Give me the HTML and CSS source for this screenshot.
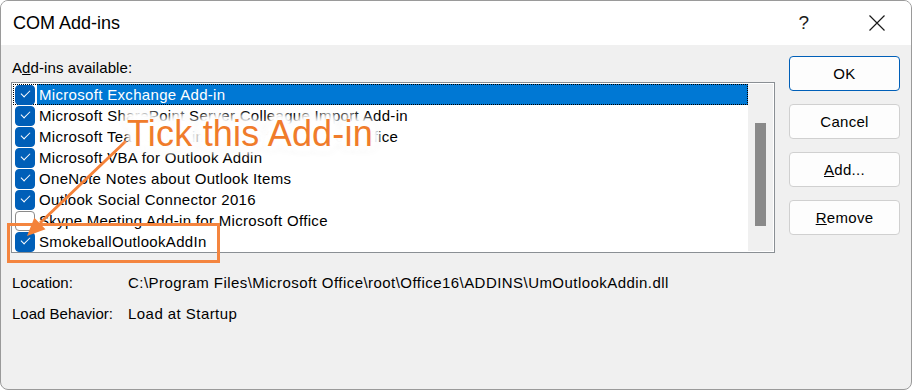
FILE: index.html
```html
<!DOCTYPE html>
<html lang="en">
<head>
    <meta charset="UTF-8">
    <title>COM Add-ins</title>
<link rel="stylesheet" href="styles.css">
</head>
<body>
    <div class="window">
        <div class="titlebar">
            <span class="title">COM Add-ins</span>
            <span class="help">?</span>
            <svg class="close" width="16" height="16" viewBox="0 0 16 16">
                <path d="M0.5 0.5 L15.5 15.5 M15.5 0.5 L0.5 15.5" stroke="#1a1a1a" stroke-width="1.2" fill="none"/>
            </svg>
        </div>

        <div class="content">
            <div class="main">
                <div class="list-label">A<u>d</u>d-ins available:</div>
                <div class="listbox">
                    <div class="rows">
                        <div class="row focused">
                            <span class="check on"></span>
                            <span class="name selected">Microsoft Exchange Add-in</span>
                        </div>
                        <div class="row">
                            <span class="check on"></span>
                            <span class="name">Microsoft SharePoint Server Colleague Import Add-in</span>
                        </div>
                        <div class="row">
                            <span class="check on"></span>
                            <span class="name">Microsoft Teams Meeting Add-in for Microsoft Office</span>
                        </div>
                        <div class="row">
                            <span class="check on"></span>
                            <span class="name">Microsoft VBA for Outlook Addin</span>
                        </div>
                        <div class="row">
                            <span class="check on"></span>
                            <span class="name">OneNote Notes about Outlook Items</span>
                        </div>
                        <div class="row">
                            <span class="check on"></span>
                            <span class="name">Outlook Social Connector 2016</span>
                        </div>
                        <div class="row">
                            <span class="check"></span>
                            <span class="name">Skype Meeting Add-in for Microsoft Office</span>
                        </div>
                        <div class="row">
                            <span class="check on"></span>
                            <span class="name">SmokeballOutlookAddIn</span>
                        </div>
                    </div>
                    <div class="scrollbar">
                        <div class="thumb"></div>
                    </div>
                </div>

                <div class="info">
                    <span class="info-key">Location:</span>
                    <span class="info-value">C:\Program Files\Microsoft Office\root\Office16\ADDINS\UmOutlookAddin.dll</span>
                </div>
                <div class="info">
                    <span class="info-key">Load Behavior:</span>
                    <span class="info-value">Load at Startup</span>
                </div>
            </div>

            <div class="buttons">
                <button class="btn default">OK</button>
                <button class="btn">Cancel</button>
                <button class="btn"><u>A</u>dd...</button>
                <button class="btn"><u>R</u>emove</button>
            </div>
        </div>

        <!-- annotation overlay -->
        <svg class="marks" width="912" height="390" viewBox="0 0 912 390">
            <rect x="7.5" y="223.5" width="210" height="37" fill="none" stroke="#f4853f" stroke-width="3"/>
            <line x1="125" y1="140" x2="39" y2="222" stroke="#f4823a" stroke-width="3"/>
            <polygon points="26,235 44.5,228.2 33.3,216.8" fill="#f4823a"/>
        </svg>
        <span class="callout">Tick this Add-in</span>
    </div>
</body>
</html>
```

FILE: styles.css
```css
/* COM Add-ins dialog */
body {
    margin: 0;
    background-color: #ffffff;
    font-family: "Liberation Sans", Arial, sans-serif;
    font-size: 15px;
    color: #000;
}

.window {
    position: relative;
    width: 912px;
    height: 390px;
    box-sizing: border-box;
    border: 1px solid #9a9a9a;
    border-radius: 8px;
    background-color: #f0f0f0;
    overflow: hidden;
}

.titlebar {
    height: 44px;
    background-color: #ffffff;
    display: flex;
    align-items: center;
    padding-left: 12px;
}

.title {
    font-size: 18px;
    flex: 1;
}

.help {
    font-size: 19px;
    color: #1a1a1a;
    margin-right: 60px;
}

.close {
    margin-right: 26px;
}

.content {
    display: flex;
    gap: 14px;
    padding: 11px 10px 0 10px;
}

.main {
    width: 764px;
    padding-top: 2px;
}

.list-label {
    line-height: 20px;
    margin-left: 1px;
    margin-bottom: 4px;
    letter-spacing: 0.1px;
}

.listbox {
    display: flex;
    height: 171px;
    box-sizing: border-box;
    border: 1px solid #8a8f94;
    background-color: #ffffff;
    padding: 1px;
}

.rows {
    flex: 1;
}

.row {
    display: flex;
    align-items: center;
    height: 21px;
    padding-left: 2px;
    box-sizing: border-box;
}

.row.focused {
    outline: 1px dotted #000;
    outline-offset: -1px;
}

.check {
    width: 20px;
    height: 20px;
    box-sizing: border-box;
    border: 1px solid #8a8a8a;
    border-radius: 4px;
    background-color: #ffffff;
    position: relative;
}

.check.on {
    background-color: #005fb8;
    border-color: #005fb8;
}

/* tick mark */
.check.on::after {
    content: "";
    position: absolute;
    left: 5px;
    top: 4px;
    width: 8px;
    height: 4px;
    border-left: 1px solid #fff;
    border-bottom: 1px solid #fff;
    transform: rotate(-45deg);
}

.name {
    margin-left: 2px;
    padding-left: 2px;
    line-height: 21px;
    letter-spacing: 0.32px;
    flex: 1;
}

.name.selected {
    background-color: #0078d4;
    color: #fff;
}

.scrollbar {
    width: 25px;
    background-color: #f0f0f0;
    padding-top: 39px;
    box-sizing: border-box;
}

.thumb {
    width: 11px;
    height: 103px;
    margin-left: 7px;
    background-color: #8a8a8a;
}

.info {
    display: flex;
    line-height: 20px;
    margin-top: 11px;
    padding-left: 1px;
}

.listbox + .info {
    margin-top: 20px;
}

.info-key {
    width: 116px;
}

.info-value {
    letter-spacing: 0.45px;
}

.buttons {
    display: flex;
    flex-direction: column;
    gap: 13px;
}

.btn {
    width: 111px;
    height: 35px;
    font-family: inherit;
    font-size: 15px;
    letter-spacing: 0.3px;
    color: #000;
    background-color: #fdfdfd;
    border: 1px solid #d0d0d0;
    border-radius: 4px;
    padding: 0;
}

.btn.default {
    border-color: #005fb8;
}

.marks {
    position: absolute;
    left: 0;
    top: 0;
    pointer-events: none;
}

.callout {
    position: absolute;
    left: 126px;
    top: 113px;
    font-size: 36px;
    line-height: 40px;
    letter-spacing: 0.2px;
    color: #f07c2b;
    text-shadow: 0 0 2px #fff, 0 0 3px #fff, 0 0 4px #fff, 0 0 5px #fff,
        5px 0 3px #fff, -5px 0 3px #fff, 0 5px 3px #fff, 0 -5px 3px #fff,
        4px 4px 3px #fff, -4px 4px 3px #fff, 4px -4px 3px #fff, -4px -4px 3px #fff,
        8px 0 5px #fff, -8px 0 5px #fff, 0 8px 5px #fff, 0 -8px 5px #fff,
        6px 6px 5px #fff, -6px 6px 5px #fff, 6px -6px 5px #fff, -6px -6px 5px #fff,
        0 0 12px rgba(0, 0, 0, 0.3);
}
```
